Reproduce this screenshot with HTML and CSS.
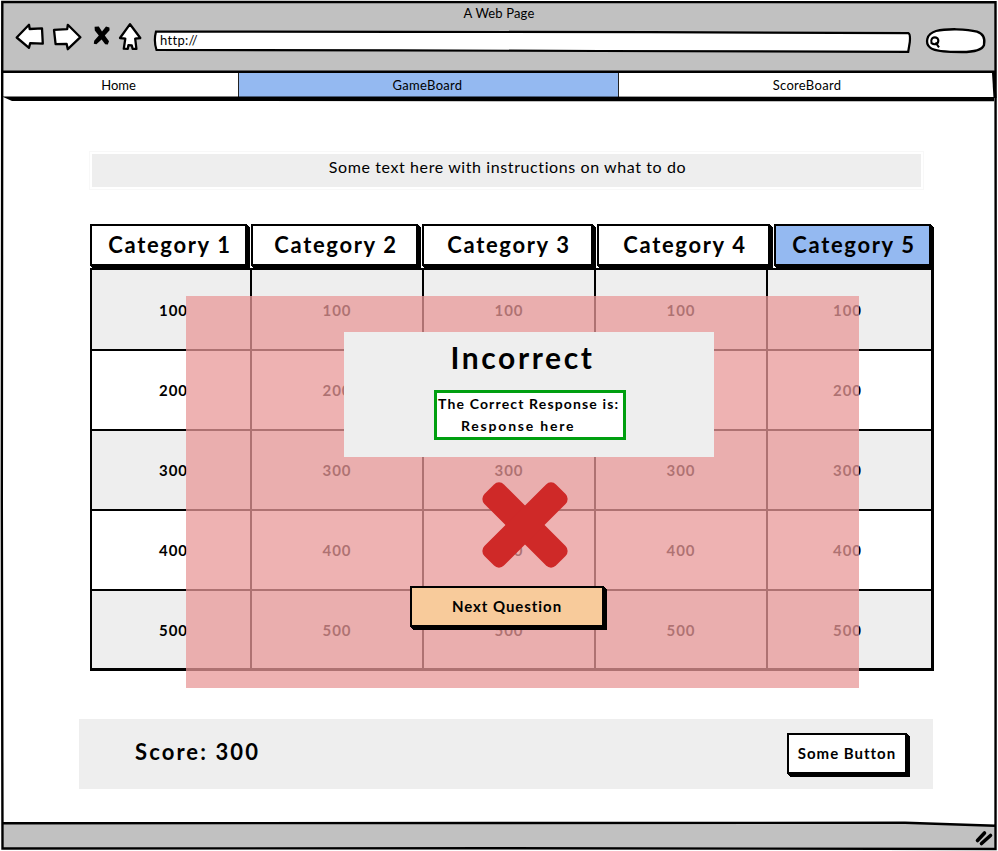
FILE: index.html
```html
<!DOCTYPE html>
<html lang="en">
<head>
<meta charset="utf-8">
<title>A Web Page</title>
<link rel="stylesheet" href="styles.css">
</head>
<body>
<div class="window">
  <header class="chrome">
    <div class="title"><span>A Web Page</span></div>
    <div class="toolbar">
      <svg class="icons" viewBox="14 20 130 32" width="130" height="32">
        <g fill="#fff" stroke="#000" stroke-width="2.3" stroke-linejoin="round">
          <path d="M16.7 37.5 29 24.8 29.7 29 42 28.4 42.8 43.6 30.2 43.1 29 47.8Z"/>
          <path d="M54 29.8 67.2 29.2 67.8 24.8 80.4 37.2 67.8 49.2 66.6 43.8 55.6 44.2Z"/>
          <path d="M130 24.2 140.3 38 135.2 38.6 136.4 48.8 132.6 48.8 131.8 45.4 128.4 45.2 127.8 48.9 123.8 48.7 125.3 38.6 120 38Z"/>
        </g>
        <path d="M94.600 26.800 98.800 26.600 102 31.600 106 26.600 109.400 27.400 109.600 30.200 104.800 35.600 109 41.200 107.800 44.400 105.200 44.200 101.600 39.400 96.400 44.200 93.800 43.800 94.200 40.800 98.800 35.600 94.800 30.400Z"/>
      </svg>
      <div class="address">
        <svg viewBox="153 29 760 25" width="760" height="25"><path d="M156 31.5 400 31.8 650 32.2 908.5 33.2Q910.5 34 909.8 42L908.2 51.8 600 51 400 50.4 156.5 50Q153.5 41 156 31.5Z" fill="#fff" stroke="#000" stroke-width="2.2"/></svg>
        <span>http://</span>
      </div>
      <svg class="search" viewBox="924 27 64 28" width="64" height="28">
        <path d="M936 31C946 28.500 967 28.700 977 31.700 984 34 985 40 984 45 982 50.500 972 52 962 52 950 52 935 52 930 47.500 925 43 926 34 936 31Z" fill="#fff" stroke="#000" stroke-width="2.300"/>
        <path d="M932.200 38.200Q935 36.600 937.500 38.300 939.300 40.500 937.300 43.600 934 45 931.500 43.200 930.600 40.500 932.200 38.200M935.500 42.500 939 47.300" fill="none" stroke="#000" stroke-width="2.100"/>
      </svg>
    </div>
  </header>
  <nav class="tabs">
    <div class="tab home"><span>Home</span></div>
    <div class="tab active"><span>GameBoard</span></div>
    <div class="tab scores"><span>ScoreBoard</span></div>
  </nav>
  <main>
    <p class="instructions"><span>Some text here with instructions on what to do</span></p>
    <section class="game">
      <div class="categories">
        <div class="raised">Category 1</div>
        <div class="raised">Category 2</div>
        <div class="raised">Category 3</div>
        <div class="raised">Category 4</div>
        <div class="raised chosen">Category 5</div>
      </div>
      <div class="board">
        <div class="shade">100</div><div class="shade">100</div><div class="shade">100</div><div class="shade">100</div><div class="shade">100</div>
        <div>200</div><div>200</div><div></div><div>200</div><div>200</div>
        <div class="shade">300</div><div class="shade">300</div><div class="shade">300</div><div class="shade">300</div><div class="shade">300</div>
        <div>400</div><div>400</div><div>400</div><div>400</div><div>400</div>
        <div class="shade">500</div><div class="shade">500</div><div class="shade">500</div><div class="shade">500</div><div class="shade">500</div>
      </div>
      <div class="overlay">
        <div class="result">
          <h1>Incorrect</h1>
          <div class="answer"><div>The Correct Response is:</div><div class="response">Response here</div></div>
        </div>
        <svg class="cross" viewBox="-43 -43 86 86" width="86" height="86" fill="#cf2928">
          <rect x="-50.600" y="-13.800" width="101.200" height="27.600" rx="7" transform="rotate(45)"/>
          <rect x="-50.600" y="-13.800" width="101.200" height="27.600" rx="7" transform="rotate(-45)"/>
        </svg>
        <div class="raised next">Next Question</div>
      </div>
    </section>
    <section class="scorebar">
      <div class="score">Score: 300</div>
      <div class="raised action">Some Button</div>
    </section>
  </main>
  <footer></footer>
  <svg class="frame" viewBox="0 0 998 851" width="998" height="851">
    <path d="M905 821 994 825 994 821Z" fill="#fff"/>
    <g fill="none" stroke="#000" stroke-width="2.400">
      <path d="M2.300 2 995.500 2.200 995.800 420 995.500 849 500 848.200 2.500 848.500 1.800 500Z"/>
      <path d="M3 71.800H995M3 823.300 500 823 905 822.800 995 825.800"/>
      <path d="M993.500 73 995 98" stroke-width="3"/>
    </g>
    <path d="M2 96.500 520 96.500 994 97 994 101.200 500 101.200 12 101Z"/>
    <path d="M977.500 840.500 984.500 833M981.500 843.500 990.500 835.500" stroke="#000" stroke-width="3.600" stroke-linecap="round"/>
  </svg>
</div>
</body>
</html>
```
FILE: styles.css
```css
* { box-sizing: border-box; }
body { margin: 0; background: #fff; color: #000; font-family: Lato, "Open Sans", sans-serif; font-size: 13px; }
.window { position: relative; width: 998px; height: 851px; padding: 3px; overflow: hidden; display: flex; flex-direction: column; }
.frame { position: absolute; inset: 0; pointer-events: none; }
.chrome { height: 70px; flex: none; background: #c1c1c1; }
.title { height: 20px; line-height: 21px; text-align: center; letter-spacing: .15px; }
.toolbar { display: flex; align-items: flex-start; padding-left: 11px; }
.icons { margin-top: -3px; }
.address { position: relative; width: 760px; height: 25px; margin: 6px 11px 0 9px; padding: 3px 0 0 7px; line-height: 17px; letter-spacing: .3px; }
.address svg { position: absolute; left: 0; top: 0; }
.address span { position: relative; }
.search { margin-top: 4px; }
.tabs { display: flex; height: 28px; flex: none; }
.tab { line-height: 25px; text-align: center; border-right: 1px solid #222; letter-spacing: .3px; }
.home { width: 236px; padding-right: 4px; letter-spacing: 0; }
.active { width: 380px; padding-right: 2px; background: #94b9f1; }
.scores { flex: 1; border: 0; }
main { flex: 1; padding-top: 53px; }
.instructions { width: 829px; height: 33px; margin: 0 0 0 89px; padding-left: 2px; line-height: 26px; font-size: 16px; text-align: center; letter-spacing: .6px; background: #eee; box-shadow: 0 0 0 2px #fff, 0 0 0 3px #f8f8f8; }
.game { position: relative; margin: 37px 0 0 87px; width: 844px; }
.categories { display: grid; grid-template-columns: 160px 170px 174px 176px 160px; gap: 1px; height: 44px; }
.raised { display: flex; align-items: center; justify-content: center; font-weight: 700; background: #fff; border: 2px solid #000; box-shadow: 1px 1px #000, 2px 2px #000, 3px 3px #000; white-space: nowrap; }
.categories .raised { height: 42px; margin-right: 3px; padding: 0 0 2px 3px; font-size: 22px; letter-spacing: 1.65px; }
.categories .chosen { background: #94b9f1; }
.board { display: grid; grid-template-columns: 158px 170px 170px 170px 163px; grid-template-rows: 79px 78px 78px 78px 77px; gap: 2px; width: 844px; height: 403px; padding: 2px 2px 3px; background: #000; }
.board div { display: flex; align-items: center; justify-content: center; background: #fff; font-weight: 700; font-size: 15px; letter-spacing: 1px; }
.board .shade { background: #eee; }
.board div:nth-child(5n+1) { padding-left: 5px; }
.board div:nth-child(5n) { padding-right: 4px; }
.overlay { position: absolute; left: 96px; top: 72px; width: 673px; height: 392px; padding-top: 36px; background: rgba(232,152,152,.75); }
.result { width: 370px; height: 125px; margin-left: 158px; background: #eee; }
.result h1 { margin: 0; height: 58px; padding-right: 13px; text-align: center; font-size: 30px; line-height: 51px; letter-spacing: 2.6px; }
.answer { width: 192px; height: 50px; margin-left: 90px; padding: 0 0 0 1px; border: 3px solid #009f10; background: #fff; font-weight: 700; font-size: 14px; line-height: 21.500px; letter-spacing: 1.15px; white-space: nowrap; }
.response { padding-left: 23px; letter-spacing: 1.8px; }
.cross { display: block; margin: 25px 0 0 296px; }
.next { width: 194px; height: 41px; margin: 18px 0 0 224px; padding-bottom: 2px; background: #f8cb9b; font-size: 15px; letter-spacing: .95px; }
.scorebar { display: flex; justify-content: space-between; width: 854px; height: 70px; margin: 48px 0 0 76px; padding: 14px 26px 0 56px; background: #eee; }
.score { font-weight: 700; font-size: 22px; line-height: 38px; letter-spacing: 2.1px; }
.action { width: 120px; height: 41px; padding-bottom: 2px; font-size: 15px; letter-spacing: 1px; }
footer { height: 24px; flex: none; background: #c1c1c1; }
```
